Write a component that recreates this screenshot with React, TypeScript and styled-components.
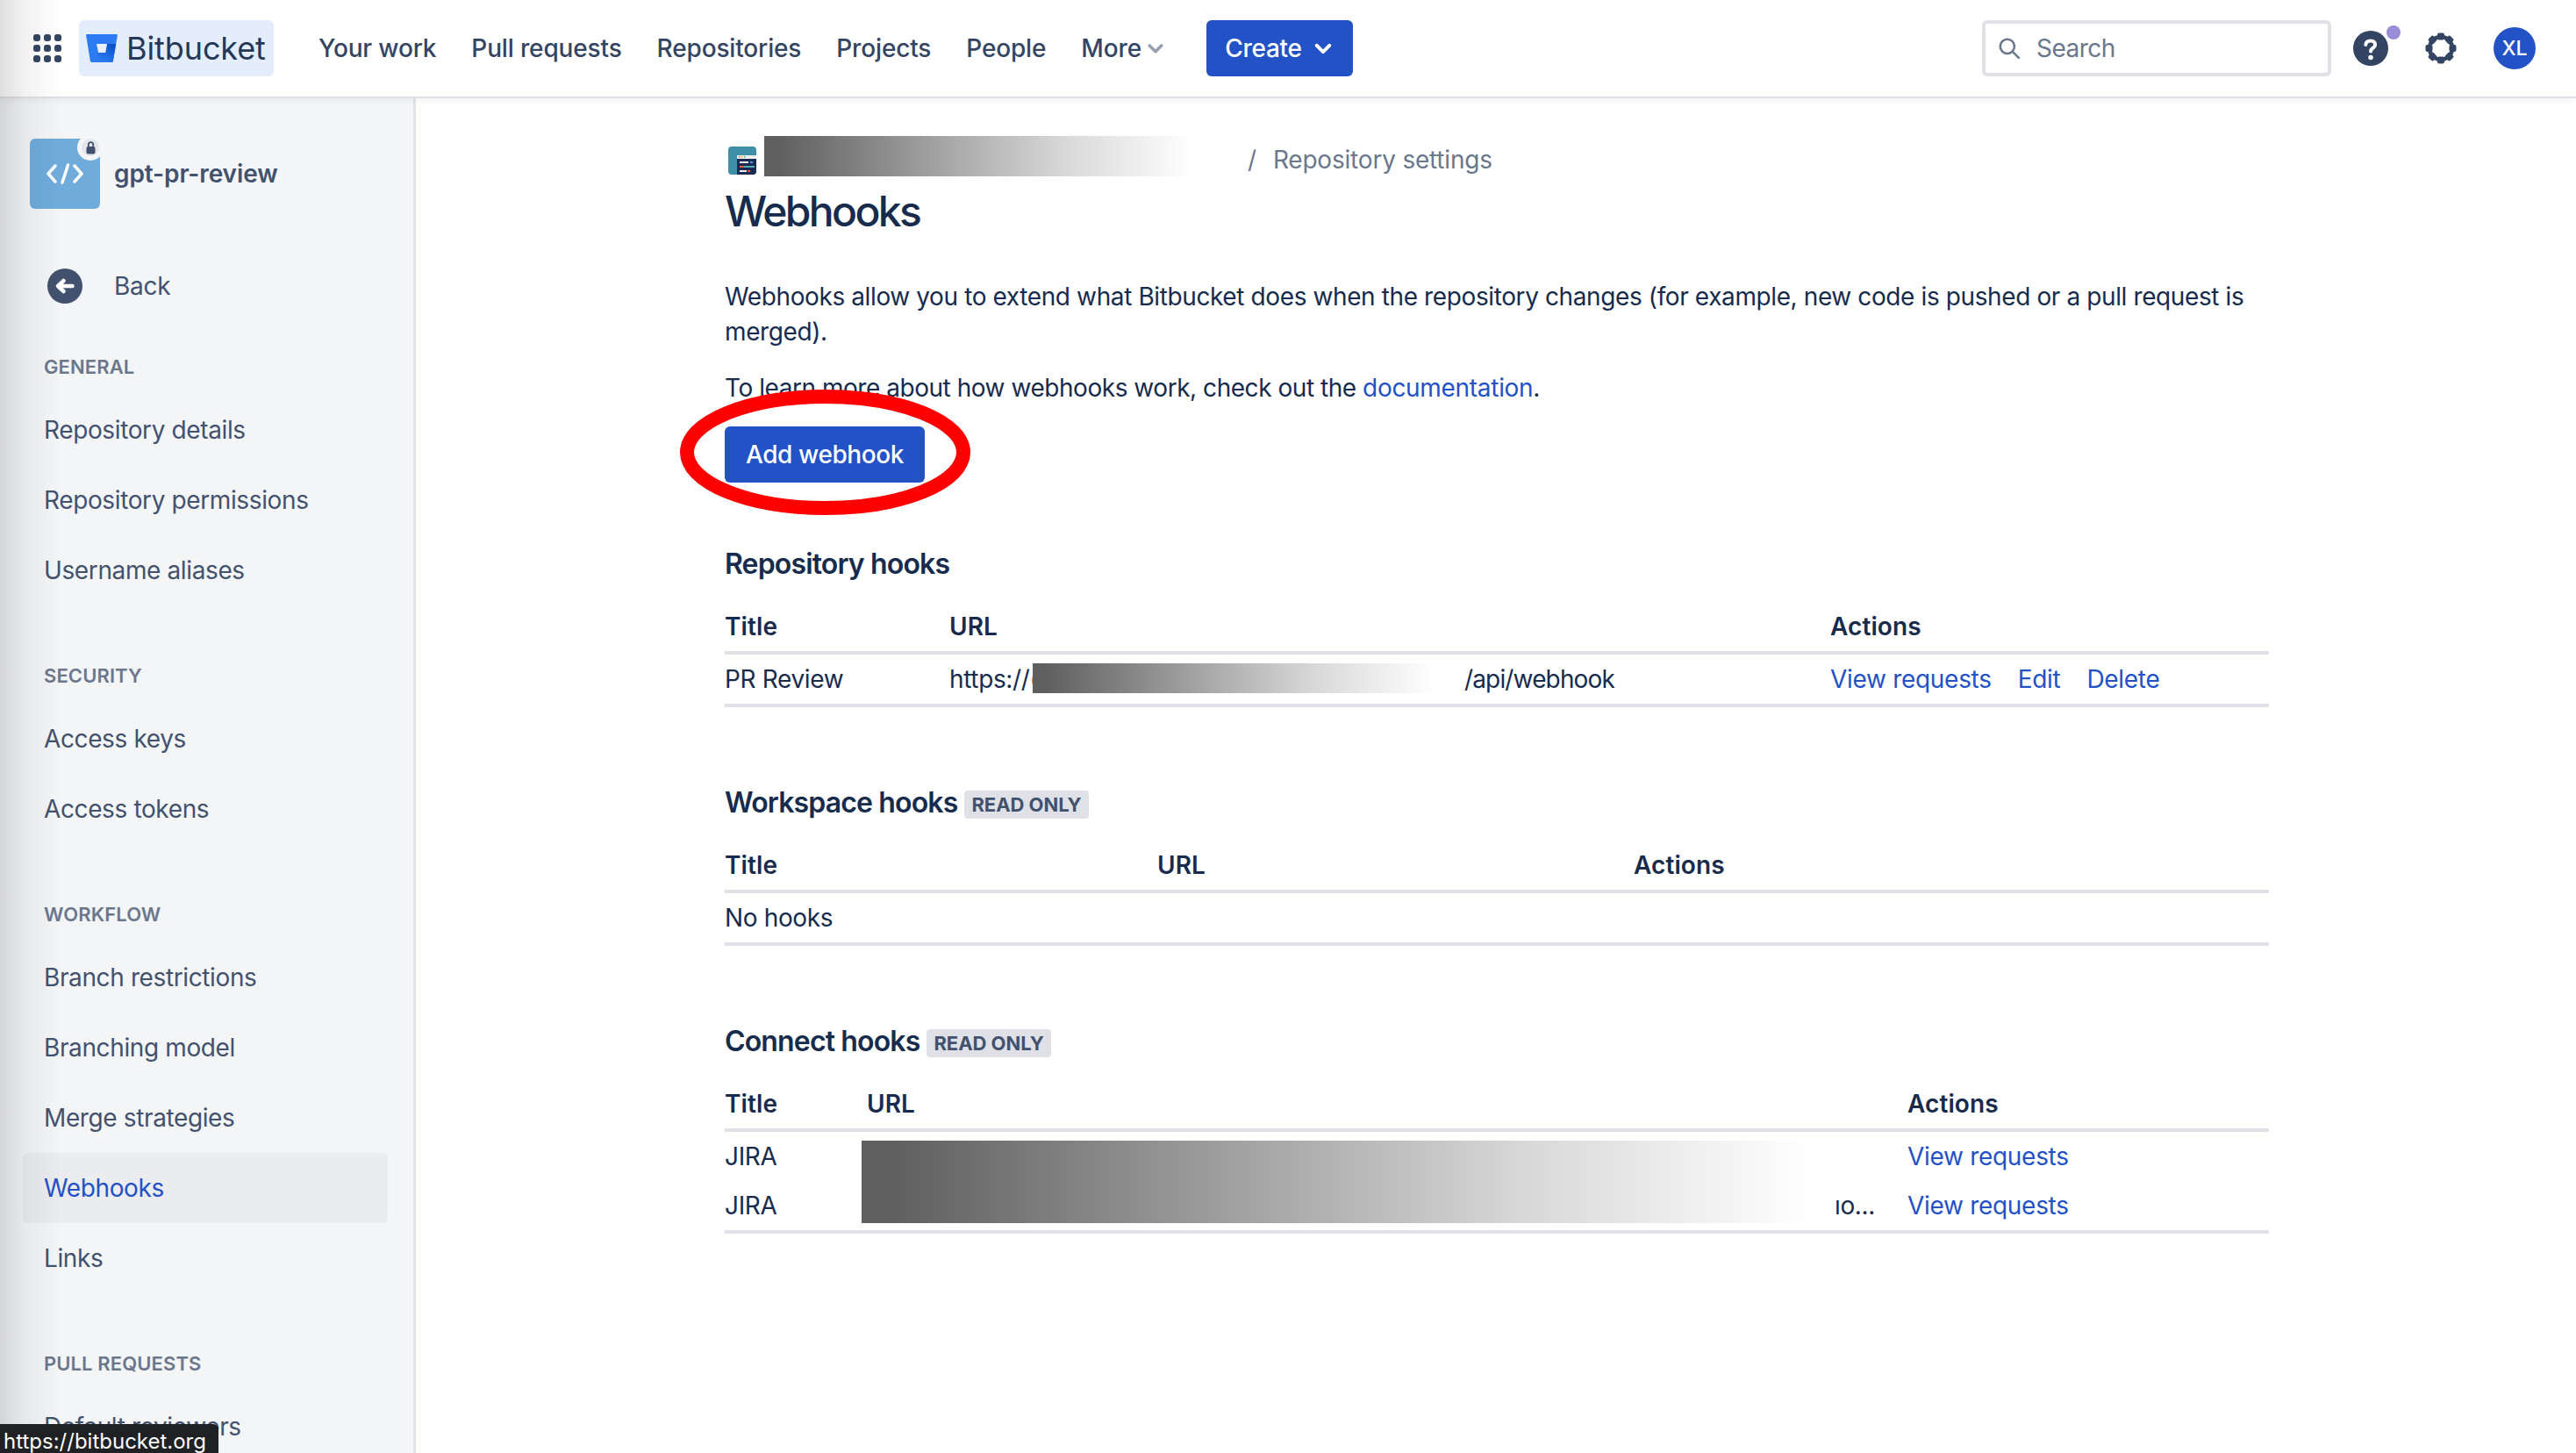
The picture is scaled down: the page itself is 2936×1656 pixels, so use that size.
import React from 'react';
import styled, { createGlobalStyle } from 'styled-components';

const GlobalStyle = createGlobalStyle`
  html, body {
    margin: 0;
    padding: 0;
    background: #ffffff;
    overflow: hidden;
  }
  * {
    box-sizing: border-box;
  }
  #root {
    font-family: 'Inter', 'Noto Sans', sans-serif;
    font-size: 28px;
    color: #172b4d;
  }
`;

const Page = styled.div`
  position: relative;
  width: 2936px;
  height: 1656px;
  display: flex;
  flex-direction: column;
  overflow: hidden;
`;

const EdgeShade = styled.div`
  position: absolute;
  top: 0;
  left: 0;
  bottom: 0;
  width: 70px;
  background: linear-gradient(to right, rgba(0, 0, 0, 0.13), rgba(0, 0, 0, 0.05) 40%, rgba(0, 0, 0, 0));
  pointer-events: none;
  z-index: 5;
`;

const TopBar = styled.header`
  height: 110px;
  flex: none;
  display: flex;
  align-items: center;
  padding: 0 46px 0 38px;
  background: #ffffff;
  box-shadow: 0 2px 0 #dfe1e6, 0 2px 10px rgba(9, 30, 66, 0.08);
  position: relative;
  z-index: 2;
`;

const LogoTile = styled.div`
  width: 222px;
  height: 64px;
  margin-left: 20px;
  padding-left: 8px;
  display: flex;
  align-items: center;
  gap: 10px;
  border-radius: 6px;
  background: #e4edfc;
`;

const LogoName = styled.span`
  font-size: 36px;
  font-weight: 400;
  letter-spacing: -0.1px;
  color: #253858;
`;

const NavList = styled.nav`
  display: flex;
  align-items: center;
  gap: 40px;
  margin-left: 51px;
`;

const NavLink = styled.span`
  display: flex;
  align-items: center;
  gap: 4px;
  font-size: 28px;
  font-weight: 500;
  letter-spacing: -0.15px;
  color: #344563;
`;

const CreateButton = styled.button`
  width: 167px;
  height: 64px;
  margin-left: 46px;
  padding: 0;
  display: flex;
  align-items: center;
  justify-content: center;
  gap: 11px;
  border: none;
  border-radius: 6px;
  background: #2351c6;
  color: #ffffff;
  font-family: inherit;
  font-size: 28px;
  font-weight: 500;
  letter-spacing: -0.3px;
`;

const Spacer = styled.div`
  flex: 1;
`;

const SearchBox = styled.div`
  width: 398px;
  height: 64px;
  display: flex;
  align-items: center;
  gap: 18px;
  padding-left: 14px;
  border: 4px solid #dfe1e6;
  border-radius: 6px;
  font-size: 28px;
  letter-spacing: -0.5px;
  color: #6b778c;
`;

const HelpWrap = styled.div`
  position: relative;
  width: 40px;
  height: 40px;
  margin-left: 25px;
  color: #344563;
`;

const HelpDot = styled.span`
  position: absolute;
  top: -6px;
  right: -14px;
  width: 16px;
  height: 16px;
  border-radius: 50%;
  background: #998dd9;
`;

const GearWrap = styled.div`
  width: 36px;
  height: 36px;
  margin-left: 42px;
  color: #344563;
`;

const Avatar = styled.div`
  width: 48px;
  height: 48px;
  margin-left: 42px;
  display: flex;
  align-items: center;
  justify-content: center;
  border-radius: 50%;
  background: #2351c6;
  color: #ffffff;
  font-size: 23px;
  font-weight: 500;
`;

const Body = styled.div`
  flex: 1;
  display: flex;
  min-height: 0;
`;

const Sidebar = styled.aside`
  width: 474px;
  flex: none;
  padding: 48px 0 0 26px;
  background: #f4f5f7;
  border-right: 3px solid #e1e3e8;
`;

const RepoHead = styled.div`
  display: flex;
  align-items: center;
  gap: 16px;
  margin-left: 8px;
  height: 80px;
`;

const RepoAvatar = styled.div`
  position: relative;
  width: 80px;
  height: 80px;
  display: flex;
  align-items: center;
  justify-content: center;
  border-radius: 6px;
  background: #6facdc;
`;

const LockBadge = styled.span`
  position: absolute;
  top: 0;
  right: 1px;
  width: 20px;
  height: 20px;
  display: flex;
  align-items: center;
  justify-content: center;
  border-radius: 50%;
  background: #e4e6ea;
  box-shadow: 0 0 0 5px #f4f5f7;
`;

const RepoName = styled.span`
  font-size: 28px;
  font-weight: 600;
  letter-spacing: -0.1px;
  color: #42526e;
`;

const BackRow = styled.div`
  display: flex;
  align-items: center;
  gap: 36px;
  height: 40px;
  margin: 68px 0 0 28px;
  font-size: 28px;
  letter-spacing: -0.3px;
  color: #42526e;
`;

const SectionLabel = styled.div`
  margin: 0 0 12px 24px;
  height: 40px;
  line-height: 40px;
  font-size: 22px;
  font-weight: 600;
  letter-spacing: 0.1px;
  color: #6b778c;
  text-transform: uppercase;
`;

const SectionGroup = styled.div<{ $top: number }>`
  margin-top: ${(p) => p.$top}px;
`;

const SideItem = styled.div<{ $active?: boolean }>`
  width: 416px;
  height: 80px;
  padding-left: 24px;
  display: flex;
  align-items: center;
  border-radius: 6px;
  font-size: 28px;
  letter-spacing: -0.38px;
  color: ${(p) => (p.$active ? '#2351c6' : '#42526e')};
  background: ${(p) => (p.$active ? '#ebecf0' : 'transparent')};
`;

const Main = styled.main`
  width: 1760px;
  margin-left: 352px;
  padding-top: 45px;
  flex: none;
`;

const Breadcrumbs = styled.div`
  height: 46px;
  display: flex;
  align-items: center;
  color: #6b778c;
  font-size: 28px;
  letter-spacing: -0.2px;
`;

const CrumbIcon = styled.div`
  width: 32px;
  height: 32px;
  margin: 10px 0 0 4px;
`;

const CrumbMask = styled.div`
  margin-left: 9px;
`;

const Redacted = styled.div<{ $w: number; $h: number }>`
  width: ${(p) => p.$w}px;
  height: ${(p) => p.$h}px;
  flex: none;
  background: linear-gradient(to right, #5f5f5f 3%, #d8d8d8 70%, #ffffff 100%);
`;

const CrumbText = styled.span`
  margin: 8px 0 0 62px;
`;

const CrumbSlash = styled.span`
  margin-right: 19px;
`;

const PageTitle = styled.h1`
  margin: 8px 0 0;
  font-size: 48px;
  line-height: 64px;
  font-weight: 500;
  letter-spacing: -2.6px;
  color: #172b4d;
`;

const Paragraph = styled.p<{ $top: number; $spacing: number }>`
  margin: ${(p) => p.$top}px 0 0;
  font-size: 28px;
  line-height: 40px;
  letter-spacing: ${(p) => p.$spacing}px;
  color: #172b4d;
`;

const Link = styled.a`
  color: #2351c6;
  text-decoration: none;
  letter-spacing: -0.3px;
`;

const AddWrap = styled.div`
  position: relative;
  width: 228px;
  margin-top: 24px;
`;

const AddButton = styled.button`
  width: 228px;
  height: 64px;
  padding: 0;
  border: none;
  border-radius: 6px;
  background: #2351c6;
  color: #ffffff;
  font-family: inherit;
  font-size: 28px;
  font-weight: 500;
  letter-spacing: -0.4px;
`;

const RedRing = styled.svg`
  position: absolute;
  top: -42px;
  left: -51px;
  width: 331px;
  height: 143px;
  overflow: visible;
`;

const Section = styled.section<{ $top: number }>`
  margin-top: ${(p) => p.$top}px;
`;

const SectionTitle = styled.h2`
  margin: 0;
  height: 44px;
  display: flex;
  align-items: center;
  gap: 8px;
  font-size: 32px;
  font-weight: 600;
  letter-spacing: -0.85px;
  color: #172b4d;
`;

const ReadOnly = styled.span`
  height: 32px;
  padding: 0 8px;
  display: flex;
  align-items: center;
  margin-top: 6px;
  border-radius: 4px;
  background: #dfe1e6;
  color: #42526e;
  font-size: 22px;
  font-weight: 700;
  letter-spacing: -0.05px;
`;

const HeadRow = styled.div<{ $cols: string }>`
  display: grid;
  grid-template-columns: ${(p) => p.$cols};
  align-items: center;
  height: 60px;
  margin-top: 22px;
  border-bottom: 4px solid #dfe1e6;
  font-size: 28px;
  font-weight: 600;
  letter-spacing: 0.1px;
  color: #172b4d;
`;

const Row = styled.div<{ $cols: string; $h: number; $line?: boolean }>`
  display: grid;
  grid-template-columns: ${(p) => p.$cols};
  align-items: center;
  height: ${(p) => p.$h}px;
  font-size: 28px;
  letter-spacing: -0.35px;
  color: #172b4d;
  border-bottom: ${(p) => (p.$line ? '4px solid #dfe1e6' : 'none')};
`;

const UrlCell = styled.div`
  position: relative;
  white-space: nowrap;
`;

const UrlMask = styled.div<{ $left: number; $top: number }>`
  position: absolute;
  left: ${(p) => p.$left}px;
  top: ${(p) => p.$top}px;
`;

const UrlTail = styled(UrlMask)`
  letter-spacing: -0.85px;
`;

const ActionLinks = styled.div`
  display: flex;
  gap: 30px;
`;

const StatusBar = styled.div`
  position: absolute;
  left: 0;
  bottom: 0;
  width: 249px;
  height: 33px;
  padding: 5px 0 0 4px;
  display: flex;
  align-items: center;
  overflow: hidden;
  border-top-right-radius: 6px;
  background: #202124;
  color: #ffffff;
  font-size: 24px;
  z-index: 6;
`;

const AppsIcon = () => (
  <svg width="32" height="32" viewBox="0 0 32 32" fill="#344563">
    {[0, 12, 24].flatMap((y) =>
      [0, 12, 24].map((x) => (
        <rect key={`${x}-${y}`} x={x} y={y} width="8" height="8" rx="3" />
      )),
    )}
  </svg>
);

const BitbucketMark = () => (
  <svg width="36" height="32" viewBox="0 0 36 32">
    <defs>
      <linearGradient id="bb" x1="1" y1="0.1" x2="0.4" y2="0.9">
        <stop offset="0" stopColor="#0a4fc4" />
        <stop offset="1" stopColor="#2c7bf2" />
      </linearGradient>
    </defs>
    <path
      d="M1.2 0C.5 0 0 .6.1 1.3l4.8 29.3c.1.8.8 1.4 1.6 1.4h23.2c.6 0 1-.4 1.1-1L35.9 1.3C36 .6 35.5 0 34.8 0z"
      fill="#2c7bf2"
    />
    <path d="M34.2 11H24l-1.8 10h-8L6 32h23.7c.6 0 1-.4 1.1-1z" fill="url(#bb)" />
    <path d="M12 11h12l-1.8 10h-8z" fill="#e9f1fe" />
  </svg>
);

const SearchIcon = () => (
  <svg width="26" height="26" viewBox="0 0 24 24" fill="none" stroke="#6b778c" strokeWidth="2.4">
    <circle cx="10" cy="10" r="7.5" />
    <path d="M16 16l6 6" strokeLinecap="round" />
  </svg>
);

const Chevron = ({ color, size }: { color: string; size: number }) => (
  <svg width={size} height={size} viewBox="0 0 16 16" fill="none" stroke={color} strokeWidth="2.4">
    <path d="M3.5 6l4.5 4.5L12.5 6" strokeLinecap="round" strokeLinejoin="round" />
  </svg>
);

const HelpIcon = () => (
  <svg width="40" height="40" viewBox="0 0 40 40">
    <circle cx="20" cy="20" r="20" fill="currentColor" />
    <path
      d="M14.3 16c0-2.9 2.4-4.6 5.5-4.6s5.3 1.7 5.3 4.4c0 2-1.2 3-2.6 4-1.4.9-2.4 1.7-2.4 3.7"
      fill="none"
      stroke="#fff"
      strokeWidth="4"
      strokeLinecap="round"
    />
    <circle cx="20" cy="30.5" r="2.8" fill="#fff" />
  </svg>
);

const GearIcon = () => (
  <svg width="36" height="36" viewBox="0 0 36 36" fill="currentColor">
    {[0, 45, 90, 135, 180, 225, 270, 315].map((angle) => (
      <rect key={angle} x="14" y="0.5" width="8" height="8" rx="2" transform={`rotate(${angle} 18 18)`} />
    ))}
    <circle cx="18" cy="18" r="13" fill="none" stroke="currentColor" strokeWidth="4.5" />
  </svg>
);

const CodeIcon = () => (
  <svg width="42" height="24" viewBox="0 0 42 24" fill="none" stroke="#ffffff" strokeWidth="3.5" strokeLinecap="round" strokeLinejoin="round">
    <path d="M10 3L2 12l8 9" />
    <path d="M32 3l8 9-8 9" />
    <path d="M24.5 2L18 22" />
  </svg>
);

const LockIcon = () => (
  <svg width="11" height="15" viewBox="0 0 11 15">
    <path d="M2.8 7V3.8a2.7 2.7 0 0 1 5.4 0V7" fill="none" stroke="#42526e" strokeWidth="1.8" />
    <rect x="0.5" y="6" width="10" height="8.5" rx="2" fill="#42526e" />
  </svg>
);

const BackIcon = () => (
  <svg width="40" height="40" viewBox="0 0 40 40">
    <circle cx="20" cy="20" r="20" fill="#42526e" />
    <path d="M28.5 20H13M18.5 14L12 20l6.5 6" fill="none" stroke="#ffffff" strokeWidth="4.5" strokeLinecap="round" strokeLinejoin="round" />
  </svg>
);

const WorkspaceIcon = () => (
  <svg width="32" height="32" viewBox="0 0 32 32">
    <defs>
      <clipPath id="ws">
        <rect width="32" height="32" rx="4" />
      </clipPath>
    </defs>
    <g clipPath="url(#ws)">
      <rect width="32" height="32" fill="#3f8fa8" />
      <rect x="10" y="10" width="22" height="22" fill="#1b2a55" />
      <rect x="10" y="10" width="22" height="4" fill="#f0f0f0" />
      <rect x="12" y="11" width="1.5" height="1.5" fill="#ff5630" />
      <rect x="15" y="11" width="1.5" height="1.5" fill="#ffab00" />
      <rect x="18" y="11" width="1.5" height="1.5" fill="#36b37e" />
      <rect x="13" y="17" width="10" height="2" fill="#f0f0f0" />
      <rect x="25" y="17" width="3" height="2" fill="#4c9aff" />
      <rect x="13" y="22" width="5" height="2" fill="#ff5630" />
      <rect x="18" y="22" width="12" height="2" fill="#4fb0a8" />
      <rect x="13" y="27" width="8" height="2" fill="#f0f0f0" />
      <rect x="22" y="27" width="3" height="2" fill="#ff5630" />
    </g>
  </svg>
);

const repoCols = '256px 1004px 1fr';
const workspaceCols = '493px 543px 1fr';
const connectCols = '162px 1186px 1fr';

const SIDE_SECTIONS = [
  { label: 'General', top: 52, items: ['Repository details', 'Repository permissions', 'Username aliases'] },
  { label: 'Security', top: 60, items: ['Access keys', 'Access tokens'] },
  { label: 'Workflow', top: 60, items: ['Branch restrictions', 'Branching model', 'Merge strategies', 'Webhooks', 'Links'] },
  { label: 'Pull requests', top: 60, items: ['Default reviewers'] },
];

export default function App() {
  return (
    <Page>
      <GlobalStyle />
      <EdgeShade />
      <TopBar>
        <AppsIcon />
        <LogoTile>
          <BitbucketMark />
          <LogoName>Bitbucket</LogoName>
        </LogoTile>
        <NavList>
          <NavLink>Your work</NavLink>
          <NavLink>Pull requests</NavLink>
          <NavLink>Repositories</NavLink>
          <NavLink>Projects</NavLink>
          <NavLink>People</NavLink>
          <NavLink>
            More
            <Chevron color="#97a0af" size={24} />
          </NavLink>
        </NavList>
        <CreateButton>
          Create
          <Chevron color="#ffffff" size={26} />
        </CreateButton>
        <Spacer />
        <SearchBox>
          <SearchIcon />
          Search
        </SearchBox>
        <HelpWrap>
          <HelpIcon />
          <HelpDot />
        </HelpWrap>
        <GearWrap>
          <GearIcon />
        </GearWrap>
        <Avatar>XL</Avatar>
      </TopBar>
      <Body>
        <Sidebar>
          <RepoHead>
            <RepoAvatar>
              <CodeIcon />
              <LockBadge>
                <LockIcon />
              </LockBadge>
            </RepoAvatar>
            <RepoName>gpt-pr-review</RepoName>
          </RepoHead>
          <BackRow>
            <BackIcon />
            Back
          </BackRow>
          {SIDE_SECTIONS.map((section) => (
            <SectionGroup key={section.label} $top={section.top}>
              <SectionLabel>{section.label}</SectionLabel>
              {section.items.map((item) => (
                <SideItem key={item} $active={item === 'Webhooks'}>
                  {item}
                </SideItem>
              ))}
            </SectionGroup>
          ))}
        </Sidebar>
        <Main>
          <Breadcrumbs>
            <CrumbIcon>
              <WorkspaceIcon />
            </CrumbIcon>
            <CrumbMask>
              <Redacted $w={489} $h={46} />
            </CrumbMask>
            <CrumbText>
              <CrumbSlash>/</CrumbSlash>
              Repository settings
            </CrumbText>
          </Breadcrumbs>
          <PageTitle>Webhooks</PageTitle>
          <Paragraph $top={45} $spacing={-0.39}>
            Webhooks allow you to extend what Bitbucket does when the repository changes (for example, new code is pushed or a pull request is merged).
          </Paragraph>
          <Paragraph $top={24} $spacing={-0.46}>
            To learn more about how webhooks work, check out the <Link>documentation</Link>.
          </Paragraph>
          <AddWrap>
            <RedRing viewBox="0 0 331 143">
              <ellipse cx="165.5" cy="71.5" rx="157.5" ry="63.5" fill="none" stroke="#fe0000" strokeWidth="16" />
            </RedRing>
            <AddButton>Add webhook</AddButton>
          </AddWrap>

          <Section $top={70}>
            <SectionTitle>Repository hooks</SectionTitle>
            <HeadRow $cols={repoCols}>
              <span>Title</span>
              <span>URL</span>
              <span>Actions</span>
            </HeadRow>
            <Row $cols={repoCols} $h={60} $line>
              <span>PR Review</span>
              <UrlCell>
                https://(
                <UrlMask $left={95} $top={-1}>
                  <Redacted $w={458} $h={34} />
                </UrlMask>
                <UrlTail $left={587} $top={0}>/api/webhook</UrlTail>
              </UrlCell>
              <ActionLinks>
                <Link>View requests</Link>
                <Link>Edit</Link>
                <Link>Delete</Link>
              </ActionLinks>
            </Row>
          </Section>

          <Section $top={86}>
            <SectionTitle>
              Workspace hooks
              <ReadOnly>READ ONLY</ReadOnly>
            </SectionTitle>
            <HeadRow $cols={workspaceCols}>
              <span>Title</span>
              <span>URL</span>
              <span>Actions</span>
            </HeadRow>
            <Row $cols={workspaceCols} $h={60} $line>
              <span>No hooks</span>
            </Row>
          </Section>

          <Section $top={86}>
            <SectionTitle>
              Connect hooks
              <ReadOnly>READ ONLY</ReadOnly>
            </SectionTitle>
            <HeadRow $cols={connectCols}>
              <span>Title</span>
              <span>URL</span>
              <span>Actions</span>
            </HeadRow>
            <Row $cols={connectCols} $h={56}>
              <span>JIRA</span>
              <UrlCell>
                <UrlMask $left={-6} $top={-18}>
                  <Redacted $w={1080} $h={94} />
                </UrlMask>
              </UrlCell>
              <Link>View requests</Link>
            </Row>
            <Row $cols={connectCols} $h={60} $line>
              <span>JIRA</span>
              <UrlCell>
                <UrlMask $left={1103} $top={-17}>ıo...</UrlMask>
              </UrlCell>
              <Link>View requests</Link>
            </Row>
          </Section>
        </Main>
      </Body>
      <StatusBar>https://bitbucket.org</StatusBar>
    </Page>
  );
}
